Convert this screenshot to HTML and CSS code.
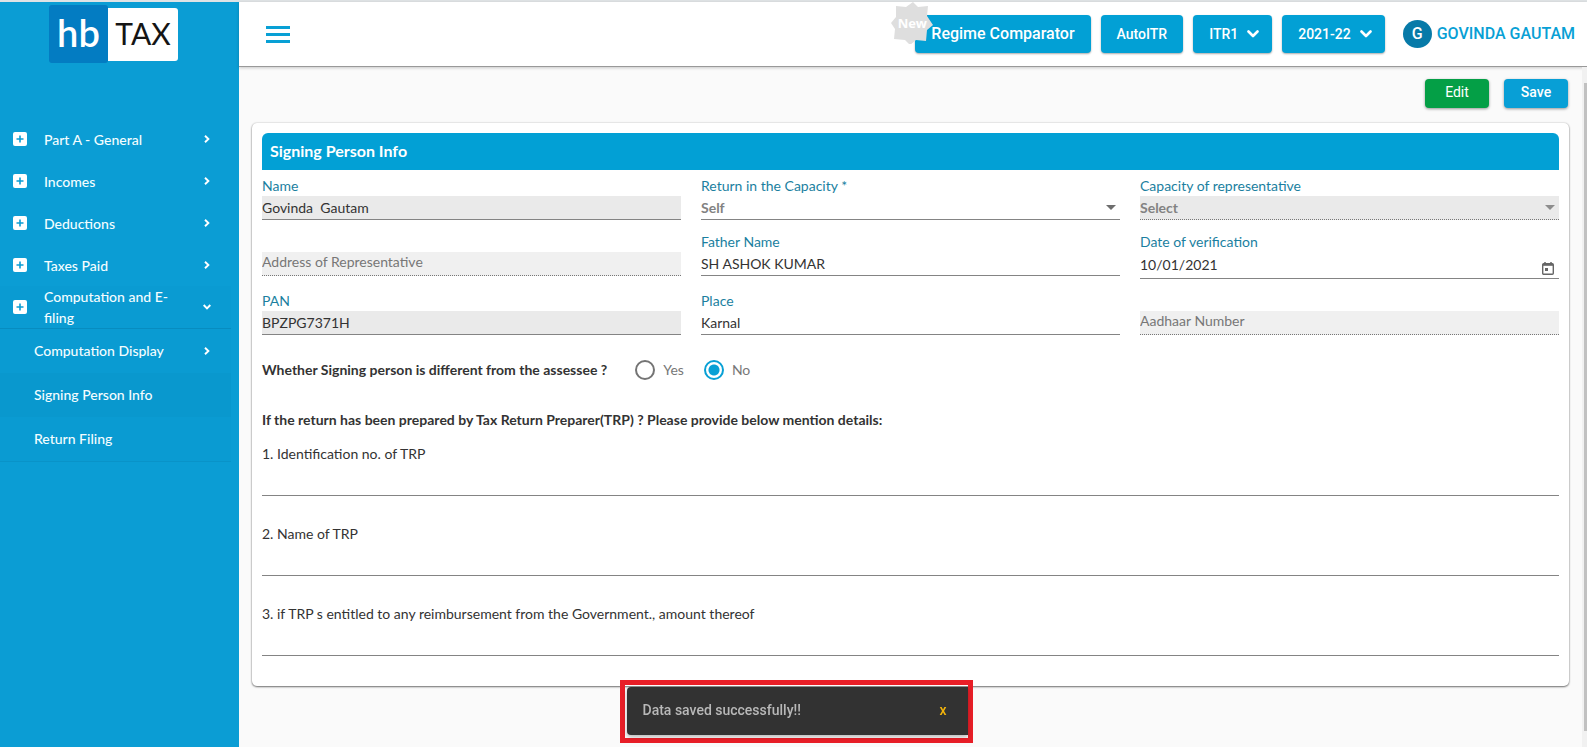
FILE: index.html
```html
<!DOCTYPE html>
<html lang="en">
<head>
<meta charset="utf-8">
<meta name="viewport" content="width=device-width, initial-scale=1">
<title>hbTAX - Signing Person Info</title>
<link rel="stylesheet" href="styles.css">
</head>
<body>
<svg class="sprite" aria-hidden="true">
  <symbol id="plus-box" viewBox="0 0 14 14"><rect width="14" height="14" rx="2" fill="#fff"/><path d="M7 3.5v7M3.5 7h7" stroke="#0b9dd4" stroke-width="1.6"/></symbol>
  <symbol id="chevron" viewBox="0 0 8 8"><path d="M2 .7 5.400 4 2 7.300" fill="none" stroke="#fff" stroke-width="1.900"/></symbol>
  <symbol id="caret" viewBox="0 0 12 8"><path d="M1.500 1.500 6 6l4.500-4.500" fill="none" stroke="#fff" stroke-width="2.600" stroke-linecap="round" stroke-linejoin="round"/></symbol>
</svg>
<div class="app">
  <aside class="sidebar">
    <div class="logo"><span class="logo-hb">hb</span><span class="logo-tax">TAX</span></div>
    <nav class="menu">
      <button class="item"><svg class="plus"><use href="#plus-box"/></svg><span>Part A - General</span><svg class="chev"><use href="#chevron"/></svg></button>
      <button class="item"><svg class="plus"><use href="#plus-box"/></svg><span>Incomes</span><svg class="chev"><use href="#chevron"/></svg></button>
      <button class="item"><svg class="plus"><use href="#plus-box"/></svg><span>Deductions</span><svg class="chev"><use href="#chevron"/></svg></button>
      <button class="item"><svg class="plus"><use href="#plus-box"/></svg><span>Taxes Paid</span><svg class="chev"><use href="#chevron"/></svg></button>
      <div class="group">
        <button class="item item-open"><svg class="plus"><use href="#plus-box"/></svg><span>Computation and E-filing</span><svg class="chev chev-down"><use href="#chevron"/></svg></button>
        <button class="sub"><span>Computation Display</span><svg class="chev"><use href="#chevron"/></svg></button>
        <a class="sub sub-active" href="#signing">Signing Person Info</a>
        <a class="sub" href="#filing">Return Filing</a>
      </div>
    </nav>
  </aside>

  <div class="page">
    <header class="topbar">
      <button class="burger" aria-label="Toggle menu"><svg width="24" height="17" viewBox="0 0 24 17"><path d="M0 1.500h24M0 8.500h24M0 15.500h24" stroke="#08a0d5" stroke-width="2.800"/></svg></button>
      <div class="actions">
        <button class="btn btn-large">Regime Comparator
          <span class="badge"><svg width="42" height="42" viewBox="0 0 42 42"><path d="M22 0l5 5 10-1-1 10 6 9-6 5-1 11-10-1-6 5-5-5-11-1 1-10-4-6 5-6 0-11 10 1z" fill="#dedede"/></svg><span class="badge-text">New</span></span>
        </button>
        <button class="btn">AutoITR</button>
        <button class="btn btn-drop">ITR1<svg class="caret"><use href="#caret"/></svg></button>
        <button class="btn btn-drop">2021-22<svg class="caret"><use href="#caret"/></svg></button>
        <a class="user" href="#profile"><span class="avatar">G</span>GOVINDA GAUTAM</a>
      </div>
    </header>

    <div class="body">
      <main class="content">
        <div class="tools"><button class="tool tool-edit">Edit</button><button class="tool">Save</button></div>
        <form class="card" id="signing">
          <h1 class="title">Signing Person Info</h1>
          <div class="fields">
            <div class="field"><label for="name">Name</label><input id="name" class="filled" value="Govinda  Gautam" readonly></div>
            <div class="field"><label for="cap">Return in the Capacity *</label><div class="pick"><select id="cap"><option>Self</option></select></div></div>
            <div class="field"><label for="rep">Capacity of representative</label><div class="pick pick-off"><select id="rep" class="filled dotted" disabled><option>Select</option></select></div></div>
            <div class="field field-bare"><input class="pale dotted" aria-label="Address of Representative" placeholder="Address of Representative" disabled></div>
            <div class="field"><label for="father">Father Name</label><input id="father" value="SH ASHOK KUMAR"></div>
            <div class="field"><label for="date">Date of verification</label><div class="date"><input id="date" value="10/01/2021"><button type="button" class="cal" aria-label="Open calendar"><svg width="12" height="13" viewBox="0 0 12 13"><path d="M3 0v2M9 0v2" stroke="#666" stroke-width="1.500"/><rect x=".7" y="1.700" width="10.600" height="10.600" rx="1" fill="none" stroke="#666" stroke-width="1.400"/><path d="M1 2.700h10" stroke="#666" stroke-width="2.200"/><path d="M3 6h3v3H3z" fill="#666"/></svg></button></div></div>
            <div class="field"><label for="pan">PAN</label><input id="pan" class="filled" value="BPZPG7371H" readonly></div>
            <div class="field"><label for="place">Place</label><input id="place" value="Karnal"></div>
            <div class="field field-bare"><input class="pale dotted" aria-label="Aadhaar Number" placeholder="Aadhaar Number" disabled></div>
          </div>
          <div class="choice" role="radiogroup" aria-labelledby="diff-label">
            <span class="question" id="diff-label">Whether Signing person is different from the assessee ?</span>
            <div class="radios">
              <label class="radio"><input type="radio" name="diff">Yes</label>
              <label class="radio"><input type="radio" name="diff" checked>No</label>
            </div>
          </div>
          <p class="question">If the return has been prepared by Tax Return Preparer(TRP) ? Please provide below mention details:</p>
          <div class="lines">
            <div class="line"><label for="l1">1. Identification no. of TRP</label><input id="l1"></div>
            <div class="line"><label for="l2">2. Name of TRP</label><input id="l2"></div>
            <div class="line"><label for="l3">3. if TRP s entitled to any reimbursement from the Government., amount thereof</label><input id="l3"></div>
          </div>
        </form>
      </main>
      <div class="track"><div class="thumb"></div></div>
    </div>
  </div>
</div>
<div class="frame"><div class="snack" role="status"><span>Data saved successfully!!</span><button class="close" aria-label="Close">x</button></div></div>
</body>
</html>
```
FILE: styles.css
```css
* { box-sizing: border-box; }
body { margin: 0; background: #fafafa; color: #333; font: 14px/20px Lato, sans-serif; }
button, input, select { font: inherit; color: inherit; border: 0; padding: 0; margin: 0; background: none; border-radius: 0; outline: 0; }
button { cursor: pointer; }
a { color: inherit; text-decoration: none; }
.sprite { position: absolute; width: 0; height: 0; }

.app { display: grid; grid-template-columns: 239px minmax(0, 1fr); min-height: 100vh; border-top: 2px solid #dfe3e5; }
.sidebar { background: #0b9dd4; color: #f4fdff; font-weight: 500; }
.logo { display: flex; align-items: center; justify-content: center; padding: 3px 12px 0 0; height: 61px; }
.logo-hb, .logo-tax { display: flex; align-items: center; justify-content: center; font-family: Lato, sans-serif; }
.logo-hb { width: 59px; height: 58px; padding-bottom: 4px; background: #037cc2; color: #fff; font-size: 38px; font-weight: 600; border-radius: 3px; }
.logo-tax { width: 70px; height: 53px; padding-bottom: 3px; background: #fff; color: #151515; font-size: 30px; font-weight: 400; border-radius: 0 3px 3px 0; }

.menu { padding-top: 55px; }
.item { display: grid; grid-template-columns: 14px 1fr 8px; gap: 17px; align-items: center; width: 100%; height: 42px; padding: 0 28px 0 13px; text-align: left; line-height: 21px; }
.plus { width: 14px; height: 14px; }
.chev { width: 8px; height: 8px; }
.chev-down { transform: rotate(90deg); }
.group { margin-right: 8px; background: #0a9bd2; border-bottom: 1px solid #0993c8; }
.item-open { padding-right: 20px; height: 43px; border-bottom: 1px solid #078cc0; }
.sub { display: flex; align-items: center; justify-content: space-between; width: 100%; height: 44px; padding: 0 20px 0 34px; }
.sub-active { background: #0998ce; }

.page { display: flex; flex-direction: column; }
.topbar { display: flex; align-items: center; justify-content: space-between; height: 65px; padding: 0 12px 0 27px; background: #fff; border-bottom: 1px solid #999; box-shadow: 0 1px 3px #0003; }
.burger { display: flex; }
.actions { display: flex; align-items: center; gap: 10px; font-family: Roboto, sans-serif; font-weight: 500; }
.btn { position: relative; display: flex; align-items: center; gap: 9px; height: 38px; padding: 0 16px; border-radius: 4px; background: #02a0d5; color: #fff; font-size: 14px; box-shadow: 0 1px 2px #0005; }
.btn-large { font-size: 16px; }
.btn-drop { padding-right: 13px; }
.caret { width: 12px; height: 8px; }
.badge { position: absolute; left: -24px; top: -13px; display: grid; place-items: center; }
.badge > * { grid-area: 1 / 1; }
.badge-text { font: 700 13px/16px "Open Sans", sans-serif; color: #fff; }
.user { display: flex; align-items: center; gap: 5px; padding-left: 8px; color: #08a0d5; font-size: 16px; }
.avatar { display: grid; place-items: center; width: 29px; height: 28px; border-radius: 50%; background: #077aa8; color: #fff; }

.body { flex: 1; display: grid; grid-template-columns: minmax(0, 1fr) 5px; }
.content { padding: 12px 13px 60px; }
.tools { display: flex; justify-content: flex-end; gap: 15px; padding-right: 1px; margin-bottom: 15px; }
.tool { width: 64px; height: 29px; padding-bottom: 3px; border-radius: 4px; background: #089fd6; color: #fff; font: 500 14px/20px Roboto, sans-serif; box-shadow: 0 1px 3px #0006; }
.tool-edit { background: #049f46; font-weight: 400; }
.track { background: #f1f1f1; padding: 16px 0 16px 2px; display: flex; }
.thumb { flex: 1; background: #c1c1c1; }

.card { padding: 10px 10px 30px; border-radius: 5px; background: #fff; box-shadow: 0 1px 2px #0008, 0 0 2px #0003; }
.title { margin: 0; padding: 8px 8px 9px; border-radius: 6px 6px 0 0; background: #02a0d5; color: #fff; font-size: 16px; line-height: 20px; font-weight: 700; }
.fields { display: grid; grid-template-columns: repeat(3, minmax(0, 1fr)); gap: 12px 20px; padding-top: 6px; }
.field > label { display: block; color: #1b7f9f; }
.field input, .field select { display: block; width: 100%; height: 24px; border-bottom: 1px solid #848484; appearance: none; }
.field-bare { padding-top: 20px; }
.field .filled { background: #eaeaea; }
.field .pale { background: #f0f0f0; padding-bottom: 4px; }
.field .dotted { border-bottom: 1px dotted #777; }
input::placeholder { color: #777; opacity: 1; }
.pick { position: relative; }
.pick select { color: #828282; font-weight: 700; opacity: 1; }
.pick::after { content: ""; position: absolute; right: 4px; top: 9px; border: 5px solid transparent; border-top-color: #6d6d6d; border-bottom: 0; }
.pick-off::after { border-top-color: #8d8d8d; }
.date { display: flex; align-items: flex-start; height: 27px; border-bottom: 1px solid #848484; }
.date input { border: 0; flex: 1; }
.date .cal { display: flex; padding: 10px 5px 0; }

.choice { display: flex; align-items: center; gap: 28px; margin: 25px 0 30px; }
.question { margin: 0; font-weight: 700; }
.radios { display: flex; gap: 20px; }
.radio { display: flex; align-items: center; gap: 8px; color: #777; }
.radio input { appearance: none; width: 20px; height: 20px; border: 2px solid #747474; border-radius: 50%; }
.radio input:checked { border-color: #08a0d5; background: radial-gradient(circle, #08a0d5 5px, #fff 6px); }
.lines { display: grid; gap: 28px; padding-top: 14px; }
.line label { display: block; }
.line input { display: block; width: 100%; height: 32px; border-bottom: 1px solid #848484; }

.frame { position: fixed; left: 50%; bottom: 4px; width: 353px; height: 63px; margin-left: -174px; border: 5px solid #e81e27; padding: 2px 0 3px 2px; }
.snack { display: flex; align-items: center; justify-content: space-between; height: 48px; padding: 0 21px 2px 16px; border-radius: 4px 0 0 4px; background: #323232; color: #b8b8b8; font: 500 14px/20px Roboto, sans-serif; box-shadow: 0 2px 4px #0004; }
.close { color: #f5b50b; }
```
